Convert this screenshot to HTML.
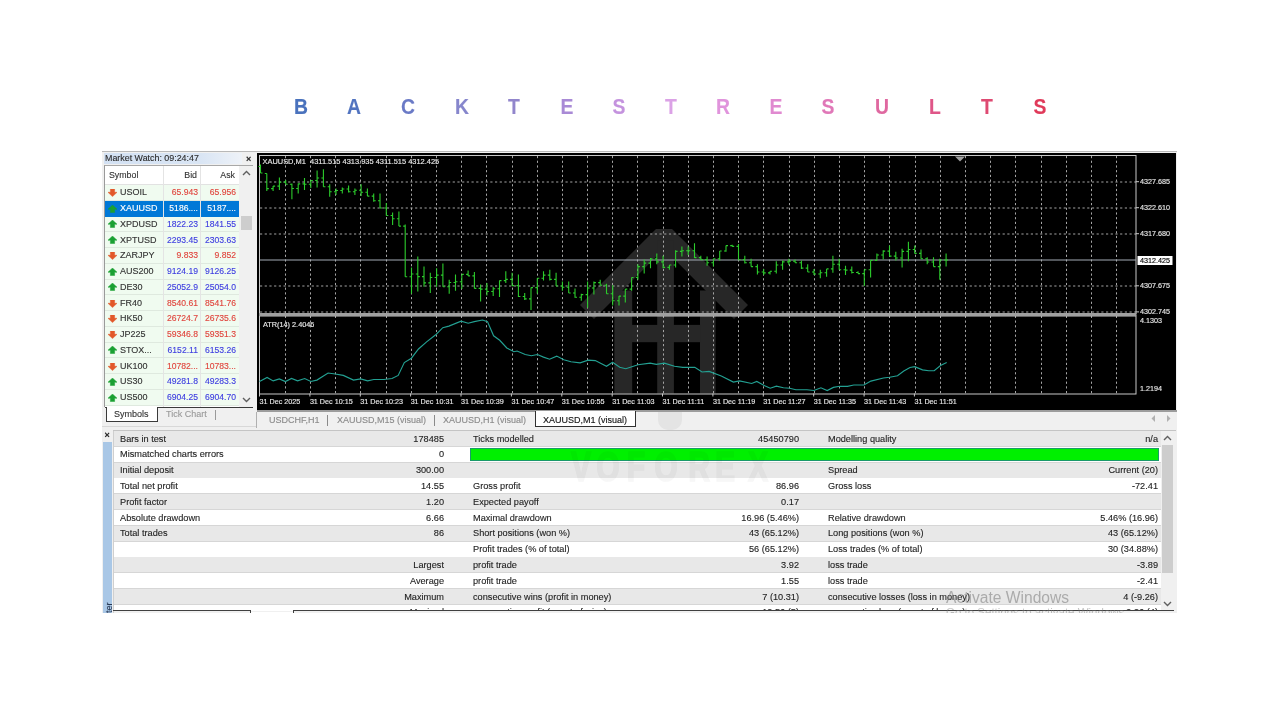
<!DOCTYPE html>
<html><head><meta charset="utf-8">
<style>
*{margin:0;padding:0;box-sizing:border-box}
html,body{width:1280px;height:720px;overflow:hidden;background:#fff;font-family:"Liberation Sans", sans-serif;}
.a{position:absolute}
.t{position:absolute;white-space:nowrap;line-height:1;-webkit-text-stroke:0.12px currentColor}
</style></head><body>

<div class="t" style="left:293px;top:96px;width:16px;text-align:center;font-size:22px;font-weight:bold;color:#4a72bd;transform:scaleX(0.88)">B</div>
<div class="t" style="left:346px;top:96px;width:16px;text-align:center;font-size:22px;font-weight:bold;color:#5274c0;transform:scaleX(0.88)">A</div>
<div class="t" style="left:400px;top:96px;width:16px;text-align:center;font-size:22px;font-weight:bold;color:#6a7ac6;transform:scaleX(0.88)">C</div>
<div class="t" style="left:454px;top:96px;width:16px;text-align:center;font-size:22px;font-weight:bold;color:#8686cc;transform:scaleX(0.88)">K</div>
<div class="t" style="left:506px;top:96px;width:16px;text-align:center;font-size:22px;font-weight:bold;color:#9286cc;transform:scaleX(0.88)">T</div>
<div class="t" style="left:559px;top:96px;width:16px;text-align:center;font-size:22px;font-weight:bold;color:#a98ad6;transform:scaleX(0.88)">E</div>
<div class="t" style="left:611px;top:96px;width:16px;text-align:center;font-size:22px;font-weight:bold;color:#c493de;transform:scaleX(0.88)">S</div>
<div class="t" style="left:663px;top:96px;width:16px;text-align:center;font-size:22px;font-weight:bold;color:#dba2e6;transform:scaleX(0.88)">T</div>
<div class="t" style="left:715px;top:96px;width:16px;text-align:center;font-size:22px;font-weight:bold;color:#e094dc;transform:scaleX(0.88)">R</div>
<div class="t" style="left:768px;top:96px;width:16px;text-align:center;font-size:22px;font-weight:bold;color:#e08ad0;transform:scaleX(0.88)">E</div>
<div class="t" style="left:820px;top:96px;width:16px;text-align:center;font-size:22px;font-weight:bold;color:#e078b8;transform:scaleX(0.88)">S</div>
<div class="t" style="left:874px;top:96px;width:16px;text-align:center;font-size:22px;font-weight:bold;color:#df68a0;transform:scaleX(0.88)">U</div>
<div class="t" style="left:927px;top:96px;width:16px;text-align:center;font-size:22px;font-weight:bold;color:#df5688;transform:scaleX(0.88)">L</div>
<div class="t" style="left:979px;top:96px;width:16px;text-align:center;font-size:22px;font-weight:bold;color:#de4a72;transform:scaleX(0.88)">T</div>
<div class="t" style="left:1032px;top:96px;width:16px;text-align:center;font-size:22px;font-weight:bold;color:#e03a5a;transform:scaleX(0.88)">S</div>
<div class="a" style="left:102px;top:151px;width:1075px;height:462px;background:#f0f0f0"></div>
<div class="a" style="left:102px;top:151px;width:1075px;height:1px;background:#b8b8b8"></div>
<div class="a" style="left:104px;top:153px;width:138px;height:11px;background:linear-gradient(90deg,#d3e1f3 0%,#d9e5f4 70%,#eef2f8 100%)"></div>
<div class="t" style="left:105px;top:154.4px;font-size:8.9px;color:#2a2a2a">Market Watch: 09:24:47</div>
<div class="t" style="left:246px;top:155.3px;font-size:9px;font-weight:bold;color:#222">&#215;</div>
<div class="a" style="left:104px;top:165px;width:135px;height:242px;background:#fff;border-left:1px solid #9a9a9a;border-top:1px solid #a8a8a8"></div>
<div class="a" style="left:105px;top:184px;width:134px;height:1px;background:#e2e2e2"></div>
<div class="t" style="left:109px;top:171px;font-size:8.8px;color:#333">Symbol</div>
<div class="t" style="left:160px;width:37px;text-align:right;top:171px;font-size:8.8px;color:#333">Bid</div>
<div class="t" style="left:198px;width:37px;text-align:right;top:171px;font-size:8.8px;color:#333">Ask</div>
<div class="a" style="left:105px;top:185.00px;width:134px;height:15.75px;background:#f0fbf0"></div>
<div class="a" style="left:105px;top:199.75px;width:134px;height:1px;background:#dfe9df"></div>
<svg class="a" style="left:107.6px;top:189.28px" width="9" height="8"><polygon points="2.4,0 6.6,0 6.6,3.3 9,3.3 4.5,7.6 0,3.3 2.4,3.3" fill="#e2582a" stroke="#e2582a" stroke-width="0.5" stroke-linejoin="round"/></svg>
<div class="t" style="left:120px;top:188.28px;font-size:9px;color:#333">USOIL</div>
<div class="t" style="left:160px;width:38px;text-align:right;top:188.28px;font-size:8.6px;color:#e0443c">65.943</div>
<div class="t" style="left:198px;width:38px;text-align:right;top:188.28px;font-size:8.6px;color:#e0443c">65.956</div>
<div class="a" style="left:105px;top:200.75px;width:134px;height:15.75px;background:#0078d7"></div>
<svg class="a" style="left:107.6px;top:204.62px" width="9" height="8"><polygon points="4.5,0 9,4.2 6.6,4.2 6.6,7.6 2.4,7.6 2.4,4.2 0,4.2" fill="#1aa032" stroke="#1aa032" stroke-width="0.5" stroke-linejoin="round"/></svg>
<div class="t" style="left:120px;top:204.03px;font-size:9px;color:#fff">XAUUSD</div>
<div class="t" style="left:160px;width:38px;text-align:right;top:204.03px;font-size:8.6px;color:#fff">5186....</div>
<div class="t" style="left:198px;width:38px;text-align:right;top:204.03px;font-size:8.6px;color:#fff">5187....</div>
<div class="a" style="left:105px;top:216.50px;width:134px;height:15.75px;background:#f0fbf0"></div>
<div class="a" style="left:105px;top:231.25px;width:134px;height:1px;background:#dfe9df"></div>
<svg class="a" style="left:107.6px;top:220.38px" width="9" height="8"><polygon points="4.5,0 9,4.2 6.6,4.2 6.6,7.6 2.4,7.6 2.4,4.2 0,4.2" fill="#1aa032" stroke="#1aa032" stroke-width="0.5" stroke-linejoin="round"/></svg>
<div class="t" style="left:120px;top:219.78px;font-size:9px;color:#333">XPDUSD</div>
<div class="t" style="left:160px;width:38px;text-align:right;top:219.78px;font-size:8.6px;color:#3c3ce0">1822.23</div>
<div class="t" style="left:198px;width:38px;text-align:right;top:219.78px;font-size:8.6px;color:#3c3ce0">1841.55</div>
<div class="a" style="left:105px;top:232.25px;width:134px;height:15.75px;background:#f0fbf0"></div>
<div class="a" style="left:105px;top:247.00px;width:134px;height:1px;background:#dfe9df"></div>
<svg class="a" style="left:107.6px;top:236.12px" width="9" height="8"><polygon points="4.5,0 9,4.2 6.6,4.2 6.6,7.6 2.4,7.6 2.4,4.2 0,4.2" fill="#1aa032" stroke="#1aa032" stroke-width="0.5" stroke-linejoin="round"/></svg>
<div class="t" style="left:120px;top:235.53px;font-size:9px;color:#333">XPTUSD</div>
<div class="t" style="left:160px;width:38px;text-align:right;top:235.53px;font-size:8.6px;color:#3c3ce0">2293.45</div>
<div class="t" style="left:198px;width:38px;text-align:right;top:235.53px;font-size:8.6px;color:#3c3ce0">2303.63</div>
<div class="a" style="left:105px;top:248.00px;width:134px;height:15.75px;background:#f0fbf0"></div>
<div class="a" style="left:105px;top:262.75px;width:134px;height:1px;background:#dfe9df"></div>
<svg class="a" style="left:107.6px;top:252.28px" width="9" height="8"><polygon points="2.4,0 6.6,0 6.6,3.3 9,3.3 4.5,7.6 0,3.3 2.4,3.3" fill="#e2582a" stroke="#e2582a" stroke-width="0.5" stroke-linejoin="round"/></svg>
<div class="t" style="left:120px;top:251.28px;font-size:9px;color:#333">ZARJPY</div>
<div class="t" style="left:160px;width:38px;text-align:right;top:251.28px;font-size:8.6px;color:#e0443c">9.833</div>
<div class="t" style="left:198px;width:38px;text-align:right;top:251.28px;font-size:8.6px;color:#e0443c">9.852</div>
<div class="a" style="left:105px;top:263.75px;width:134px;height:15.75px;background:#f0fbf0"></div>
<div class="a" style="left:105px;top:278.50px;width:134px;height:1px;background:#dfe9df"></div>
<svg class="a" style="left:107.6px;top:267.62px" width="9" height="8"><polygon points="4.5,0 9,4.2 6.6,4.2 6.6,7.6 2.4,7.6 2.4,4.2 0,4.2" fill="#1aa032" stroke="#1aa032" stroke-width="0.5" stroke-linejoin="round"/></svg>
<div class="t" style="left:120px;top:267.02px;font-size:9px;color:#333">AUS200</div>
<div class="t" style="left:160px;width:38px;text-align:right;top:267.02px;font-size:8.6px;color:#3c3ce0">9124.19</div>
<div class="t" style="left:198px;width:38px;text-align:right;top:267.02px;font-size:8.6px;color:#3c3ce0">9126.25</div>
<div class="a" style="left:105px;top:279.50px;width:134px;height:15.75px;background:#f0fbf0"></div>
<div class="a" style="left:105px;top:294.25px;width:134px;height:1px;background:#dfe9df"></div>
<svg class="a" style="left:107.6px;top:283.38px" width="9" height="8"><polygon points="4.5,0 9,4.2 6.6,4.2 6.6,7.6 2.4,7.6 2.4,4.2 0,4.2" fill="#1aa032" stroke="#1aa032" stroke-width="0.5" stroke-linejoin="round"/></svg>
<div class="t" style="left:120px;top:282.77px;font-size:9px;color:#333">DE30</div>
<div class="t" style="left:160px;width:38px;text-align:right;top:282.77px;font-size:8.6px;color:#3c3ce0">25052.9</div>
<div class="t" style="left:198px;width:38px;text-align:right;top:282.77px;font-size:8.6px;color:#3c3ce0">25054.0</div>
<div class="a" style="left:105px;top:295.25px;width:134px;height:15.75px;background:#f0fbf0"></div>
<div class="a" style="left:105px;top:310.00px;width:134px;height:1px;background:#dfe9df"></div>
<svg class="a" style="left:107.6px;top:299.52px" width="9" height="8"><polygon points="2.4,0 6.6,0 6.6,3.3 9,3.3 4.5,7.6 0,3.3 2.4,3.3" fill="#e2582a" stroke="#e2582a" stroke-width="0.5" stroke-linejoin="round"/></svg>
<div class="t" style="left:120px;top:298.52px;font-size:9px;color:#333">FR40</div>
<div class="t" style="left:160px;width:38px;text-align:right;top:298.52px;font-size:8.6px;color:#e0443c">8540.61</div>
<div class="t" style="left:198px;width:38px;text-align:right;top:298.52px;font-size:8.6px;color:#e0443c">8541.76</div>
<div class="a" style="left:105px;top:311.00px;width:134px;height:15.75px;background:#f0fbf0"></div>
<div class="a" style="left:105px;top:325.75px;width:134px;height:1px;background:#dfe9df"></div>
<svg class="a" style="left:107.6px;top:315.27px" width="9" height="8"><polygon points="2.4,0 6.6,0 6.6,3.3 9,3.3 4.5,7.6 0,3.3 2.4,3.3" fill="#e2582a" stroke="#e2582a" stroke-width="0.5" stroke-linejoin="round"/></svg>
<div class="t" style="left:120px;top:314.27px;font-size:9px;color:#333">HK50</div>
<div class="t" style="left:160px;width:38px;text-align:right;top:314.27px;font-size:8.6px;color:#e0443c">26724.7</div>
<div class="t" style="left:198px;width:38px;text-align:right;top:314.27px;font-size:8.6px;color:#e0443c">26735.6</div>
<div class="a" style="left:105px;top:326.75px;width:134px;height:15.75px;background:#f0fbf0"></div>
<div class="a" style="left:105px;top:341.50px;width:134px;height:1px;background:#dfe9df"></div>
<svg class="a" style="left:107.6px;top:331.02px" width="9" height="8"><polygon points="2.4,0 6.6,0 6.6,3.3 9,3.3 4.5,7.6 0,3.3 2.4,3.3" fill="#e2582a" stroke="#e2582a" stroke-width="0.5" stroke-linejoin="round"/></svg>
<div class="t" style="left:120px;top:330.02px;font-size:9px;color:#333">JP225</div>
<div class="t" style="left:160px;width:38px;text-align:right;top:330.02px;font-size:8.6px;color:#e0443c">59346.8</div>
<div class="t" style="left:198px;width:38px;text-align:right;top:330.02px;font-size:8.6px;color:#e0443c">59351.3</div>
<div class="a" style="left:105px;top:342.50px;width:134px;height:15.75px;background:#f0fbf0"></div>
<div class="a" style="left:105px;top:357.25px;width:134px;height:1px;background:#dfe9df"></div>
<svg class="a" style="left:107.6px;top:346.38px" width="9" height="8"><polygon points="4.5,0 9,4.2 6.6,4.2 6.6,7.6 2.4,7.6 2.4,4.2 0,4.2" fill="#1aa032" stroke="#1aa032" stroke-width="0.5" stroke-linejoin="round"/></svg>
<div class="t" style="left:120px;top:345.77px;font-size:9px;color:#333">STOX...</div>
<div class="t" style="left:160px;width:38px;text-align:right;top:345.77px;font-size:8.6px;color:#3c3ce0">6152.11</div>
<div class="t" style="left:198px;width:38px;text-align:right;top:345.77px;font-size:8.6px;color:#3c3ce0">6153.26</div>
<div class="a" style="left:105px;top:358.25px;width:134px;height:15.75px;background:#f0fbf0"></div>
<div class="a" style="left:105px;top:373.00px;width:134px;height:1px;background:#dfe9df"></div>
<svg class="a" style="left:107.6px;top:362.52px" width="9" height="8"><polygon points="2.4,0 6.6,0 6.6,3.3 9,3.3 4.5,7.6 0,3.3 2.4,3.3" fill="#e2582a" stroke="#e2582a" stroke-width="0.5" stroke-linejoin="round"/></svg>
<div class="t" style="left:120px;top:361.52px;font-size:9px;color:#333">UK100</div>
<div class="t" style="left:160px;width:38px;text-align:right;top:361.52px;font-size:8.6px;color:#e0443c">10782...</div>
<div class="t" style="left:198px;width:38px;text-align:right;top:361.52px;font-size:8.6px;color:#e0443c">10783...</div>
<div class="a" style="left:105px;top:374.00px;width:134px;height:15.75px;background:#f0fbf0"></div>
<div class="a" style="left:105px;top:388.75px;width:134px;height:1px;background:#dfe9df"></div>
<svg class="a" style="left:107.6px;top:377.88px" width="9" height="8"><polygon points="4.5,0 9,4.2 6.6,4.2 6.6,7.6 2.4,7.6 2.4,4.2 0,4.2" fill="#1aa032" stroke="#1aa032" stroke-width="0.5" stroke-linejoin="round"/></svg>
<div class="t" style="left:120px;top:377.27px;font-size:9px;color:#333">US30</div>
<div class="t" style="left:160px;width:38px;text-align:right;top:377.27px;font-size:8.6px;color:#3c3ce0">49281.8</div>
<div class="t" style="left:198px;width:38px;text-align:right;top:377.27px;font-size:8.6px;color:#3c3ce0">49283.3</div>
<div class="a" style="left:105px;top:389.75px;width:134px;height:15.75px;background:#f0fbf0"></div>
<div class="a" style="left:105px;top:404.50px;width:134px;height:1px;background:#dfe9df"></div>
<svg class="a" style="left:107.6px;top:393.62px" width="9" height="8"><polygon points="4.5,0 9,4.2 6.6,4.2 6.6,7.6 2.4,7.6 2.4,4.2 0,4.2" fill="#1aa032" stroke="#1aa032" stroke-width="0.5" stroke-linejoin="round"/></svg>
<div class="t" style="left:120px;top:393.02px;font-size:9px;color:#333">US500</div>
<div class="t" style="left:160px;width:38px;text-align:right;top:393.02px;font-size:8.6px;color:#3c3ce0">6904.25</div>
<div class="t" style="left:198px;width:38px;text-align:right;top:393.02px;font-size:8.6px;color:#3c3ce0">6904.70</div>
<div class="a" style="left:162.5px;top:166px;width:1px;height:241px;background:#e4e4e4"></div>
<div class="a" style="left:200px;top:166px;width:1px;height:241px;background:#e4e4e4"></div>
<div class="a" style="left:239px;top:165px;width:14px;height:242px;background:#f0f0f0"></div>
<div class="a" style="left:239px;top:165px;width:14px;height:1px;background:#a8a8a8"></div>
<svg class="a" style="left:242px;top:170px" width="9" height="6"><polyline points="1,5 4.5,1.5 8,5" fill="none" stroke="#606060" stroke-width="1.4"/></svg>
<svg class="a" style="left:242px;top:397px" width="9" height="6"><polyline points="1,1 4.5,4.5 8,1" fill="none" stroke="#606060" stroke-width="1.4"/></svg>
<div class="a" style="left:241px;top:216px;width:11px;height:13.5px;background:#cdcdcd"></div>
<div class="a" style="left:105px;top:406.5px;width:148px;height:1.2px;background:#3a3a3a"></div>
<div class="a" style="left:105.5px;top:407px;width:52px;height:15px;background:#fff;border:1px solid #3a3a3a;border-top:none"></div>
<div class="t" style="left:114px;top:410px;font-size:9px;color:#333">Symbols</div>
<div class="t" style="left:166px;top:410px;font-size:9px;color:#9a9a9a">Tick Chart</div>
<div class="a" style="left:215px;top:410px;width:1px;height:10px;background:#9a9a9a"></div>
<div class="a" style="left:102px;top:426px;width:155px;height:1px;background:#d8d8d8"></div>
<svg class="a" style="left:257px;top:152.5px" width="919" height="257.5" viewBox="257 152.5 919 257.5"><rect x="257" y="152.5" width="919" height="257.5" fill="#000"/><polygon points="580,304.4 656,228.4 672,228.4 748,304.4 734,318.4 664,248.4 594,318.4" fill="#272727"/><rect x="614.4" y="290" width="17.8" height="103" fill="#272727"/><rect x="657.2" y="240" width="16.7" height="153" fill="#272727"/><rect x="700" y="290" width="15.6" height="103" fill="#272727"/><rect x="632" y="324.4" width="68.2" height="17.3" fill="#272727"/><line x1="285.5" y1="155.5" x2="285.5" y2="393" stroke="#a4a4a4" stroke-width="1" stroke-dasharray="2.2,2.5"/><line x1="310.5" y1="155.5" x2="310.5" y2="393" stroke="#a4a4a4" stroke-width="1" stroke-dasharray="2.2,2.5"/><line x1="335.5" y1="155.5" x2="335.5" y2="393" stroke="#a4a4a4" stroke-width="1" stroke-dasharray="2.2,2.5"/><line x1="360.5" y1="155.5" x2="360.5" y2="393" stroke="#a4a4a4" stroke-width="1" stroke-dasharray="2.2,2.5"/><line x1="386.5" y1="155.5" x2="386.5" y2="393" stroke="#a4a4a4" stroke-width="1" stroke-dasharray="2.2,2.5"/><line x1="411.5" y1="155.5" x2="411.5" y2="393" stroke="#a4a4a4" stroke-width="1" stroke-dasharray="2.2,2.5"/><line x1="436.5" y1="155.5" x2="436.5" y2="393" stroke="#a4a4a4" stroke-width="1" stroke-dasharray="2.2,2.5"/><line x1="461.5" y1="155.5" x2="461.5" y2="393" stroke="#a4a4a4" stroke-width="1" stroke-dasharray="2.2,2.5"/><line x1="486.5" y1="155.5" x2="486.5" y2="393" stroke="#a4a4a4" stroke-width="1" stroke-dasharray="2.2,2.5"/><line x1="512.5" y1="155.5" x2="512.5" y2="393" stroke="#a4a4a4" stroke-width="1" stroke-dasharray="2.2,2.5"/><line x1="537.5" y1="155.5" x2="537.5" y2="393" stroke="#a4a4a4" stroke-width="1" stroke-dasharray="2.2,2.5"/><line x1="562.5" y1="155.5" x2="562.5" y2="393" stroke="#a4a4a4" stroke-width="1" stroke-dasharray="2.2,2.5"/><line x1="587.5" y1="155.5" x2="587.5" y2="393" stroke="#a4a4a4" stroke-width="1" stroke-dasharray="2.2,2.5"/><line x1="612.5" y1="155.5" x2="612.5" y2="393" stroke="#a4a4a4" stroke-width="1" stroke-dasharray="2.2,2.5"/><line x1="637.5" y1="155.5" x2="637.5" y2="393" stroke="#a4a4a4" stroke-width="1" stroke-dasharray="2.2,2.5"/><line x1="663.5" y1="155.5" x2="663.5" y2="393" stroke="#a4a4a4" stroke-width="1" stroke-dasharray="2.2,2.5"/><line x1="688.5" y1="155.5" x2="688.5" y2="393" stroke="#a4a4a4" stroke-width="1" stroke-dasharray="2.2,2.5"/><line x1="713.5" y1="155.5" x2="713.5" y2="393" stroke="#a4a4a4" stroke-width="1" stroke-dasharray="2.2,2.5"/><line x1="738.5" y1="155.5" x2="738.5" y2="393" stroke="#a4a4a4" stroke-width="1" stroke-dasharray="2.2,2.5"/><line x1="763.5" y1="155.5" x2="763.5" y2="393" stroke="#a4a4a4" stroke-width="1" stroke-dasharray="2.2,2.5"/><line x1="789.5" y1="155.5" x2="789.5" y2="393" stroke="#a4a4a4" stroke-width="1" stroke-dasharray="2.2,2.5"/><line x1="814.5" y1="155.5" x2="814.5" y2="393" stroke="#a4a4a4" stroke-width="1" stroke-dasharray="2.2,2.5"/><line x1="839.5" y1="155.5" x2="839.5" y2="393" stroke="#a4a4a4" stroke-width="1" stroke-dasharray="2.2,2.5"/><line x1="864.5" y1="155.5" x2="864.5" y2="393" stroke="#a4a4a4" stroke-width="1" stroke-dasharray="2.2,2.5"/><line x1="889.5" y1="155.5" x2="889.5" y2="393" stroke="#a4a4a4" stroke-width="1" stroke-dasharray="2.2,2.5"/><line x1="915.5" y1="155.5" x2="915.5" y2="393" stroke="#a4a4a4" stroke-width="1" stroke-dasharray="2.2,2.5"/><line x1="940.5" y1="155.5" x2="940.5" y2="393" stroke="#a4a4a4" stroke-width="1" stroke-dasharray="2.2,2.5"/><line x1="965.5" y1="155.5" x2="965.5" y2="393" stroke="#a4a4a4" stroke-width="1" stroke-dasharray="2.2,2.5"/><line x1="990.5" y1="155.5" x2="990.5" y2="393" stroke="#a4a4a4" stroke-width="1" stroke-dasharray="2.2,2.5"/><line x1="1015.5" y1="155.5" x2="1015.5" y2="393" stroke="#a4a4a4" stroke-width="1" stroke-dasharray="2.2,2.5"/><line x1="1041.5" y1="155.5" x2="1041.5" y2="393" stroke="#a4a4a4" stroke-width="1" stroke-dasharray="2.2,2.5"/><line x1="1066.5" y1="155.5" x2="1066.5" y2="393" stroke="#a4a4a4" stroke-width="1" stroke-dasharray="2.2,2.5"/><line x1="1091.5" y1="155.5" x2="1091.5" y2="393" stroke="#a4a4a4" stroke-width="1" stroke-dasharray="2.2,2.5"/><line x1="1116.5" y1="155.5" x2="1116.5" y2="393" stroke="#a4a4a4" stroke-width="1" stroke-dasharray="2.2,2.5"/><line x1="260" y1="181.5" x2="1136" y2="181.5" stroke="#a4a4a4" stroke-width="1" stroke-dasharray="2.2,2.5"/><line x1="260" y1="207.5" x2="1136" y2="207.5" stroke="#a4a4a4" stroke-width="1" stroke-dasharray="2.2,2.5"/><line x1="260" y1="233.5" x2="1136" y2="233.5" stroke="#a4a4a4" stroke-width="1" stroke-dasharray="2.2,2.5"/><line x1="260" y1="285.5" x2="1136" y2="285.5" stroke="#a4a4a4" stroke-width="1" stroke-dasharray="2.2,2.5"/><line x1="260" y1="311.5" x2="1136" y2="311.5" stroke="#a4a4a4" stroke-width="1" stroke-dasharray="2.2,2.5"/><rect x="259.5" y="155" width="876.5" height="158" fill="none" stroke="#c8c8c8" stroke-width="1"/><rect x="259.5" y="315.5" width="876.5" height="78" fill="none" stroke="#c8c8c8" stroke-width="1"/><rect x="259" y="312.5" width="877.5" height="3" fill="#a0a0a0"/><line x1="260" y1="259.5" x2="1136" y2="259.5" stroke="#a4acb6" stroke-width="1"/><path d="M260.5 164.0V172.5M258.5 166.0H260.5M260.5 172.5H262.5M266.8 173.0V190.6M264.8 173.0H266.8M266.8 188.1H268.8M273.1 185.6V190.6M271.1 188.1H273.1M273.1 185.6H275.1M279.4 177.0V189.4M277.4 185.6H279.4M279.4 181.6H281.4M285.7 179.4V183.8M283.7 181.6H285.7M285.7 183.8H287.7M291.9 183.0V198.8M289.9 183.8H291.9M291.9 188.0H293.9M298.2 183.0V193.0M296.2 188.0H298.2M298.2 183.4H300.2M304.5 177.5V189.4M302.5 183.4H304.5M304.5 183.8H306.5M310.8 180.0V187.5M308.8 183.8H310.8M310.8 180.0H312.8M317.1 170.0V187.0M315.1 180.0H317.1M317.1 177.5H319.1M323.4 168.8V186.2M321.4 177.5H323.4M323.4 186.2H325.4M329.7 183.8V196.2M327.7 186.2H329.7M329.7 191.2H331.7M336.0 188.0V194.4M334.0 191.2H336.0M336.0 190.0H338.0M342.3 187.0V193.0M340.3 190.0H342.3M342.3 188.5H344.3M348.6 185.0V192.0M346.6 188.5H348.6M348.6 191.2H350.6M354.9 188.0V194.4M352.9 191.2H354.9M354.9 189.7H356.9M361.1 183.8V195.6M359.1 189.7H361.1M361.1 191.8H363.1M367.4 188.0V195.6M365.4 191.8H367.4M367.4 195.6H369.4M373.7 193.0V201.2M371.7 195.6H373.7M373.7 200.2H375.7M380.0 193.0V207.5M378.0 200.2H380.0M380.0 207.5H382.0M386.3 202.5V215.0M384.3 207.5H386.3M386.3 215.0H388.3M392.6 212.0V224.4M390.6 215.0H392.6M392.6 218.3H394.6M398.9 211.0V225.6M396.9 218.3H398.9M398.9 225.6H400.9M405.2 224.0V276.2M403.2 225.6H405.2M405.2 276.2H407.2M411.5 267.0V293.3M409.5 276.2H411.5M411.5 273.5H413.5M417.8 256.0V291.0M415.8 273.5H417.8M417.8 276.1H419.8M424.0 266.0V286.3M422.0 276.1H424.0M424.0 282.4H426.0M430.3 272.3V292.5M428.3 282.4H430.3M430.3 277.0H432.3M436.6 267.7V286.3M434.6 277.0H436.6M436.6 274.6H438.6M442.9 263.0V286.3M440.9 274.6H442.9M442.9 286.3H444.9M449.2 279.3V293.3M447.2 286.3H449.2M449.2 282.0H451.2M455.5 273.9V290.2M453.5 282.0H455.5M455.5 281.2H457.5M461.8 273.9V288.6M459.8 281.2H461.8M461.8 273.9H463.8M468.1 270.0V275.4M466.1 273.9H468.1M468.1 275.4H470.1M474.4 271.5V287.9M472.4 275.4H474.4M474.4 287.9H476.4M480.6 284.0V301.0M478.6 287.9H480.6M480.6 288.6H482.6M486.9 282.4V294.9M484.9 288.6H486.9M486.9 291.0H488.9M493.2 286.3V295.6M491.2 291.0H493.2M493.2 288.2H495.2M499.5 280.1V296.4M497.5 288.2H499.5M499.5 280.1H501.5M505.8 270.8V282.4M503.8 280.1H505.8M505.8 278.9H507.8M512.1 272.3V285.5M510.1 278.9H512.1M512.1 285.1H514.1M518.4 273.9V296.4M516.4 285.1H518.4M518.4 296.0H520.4M524.7 292.5V299.5M522.7 296.0H524.7M524.7 298.4H526.7M531.0 287.1V309.6M529.0 298.4H531.0M531.0 287.1H533.0M537.3 277.8V293.3M535.3 287.1H537.3M537.3 277.8H539.3M543.5 270.8V280.1M541.5 277.8H543.5M543.5 274.6H545.5M549.8 269.2V280.1M547.8 274.6H549.8M549.8 278.9H551.8M556.1 272.3V285.5M554.1 278.9H556.1M556.1 285.5H558.1M562.4 280.9V290.2M560.4 285.5H562.4M562.4 286.7H564.4M568.7 280.9V292.5M566.7 286.7H568.7M568.7 292.5H570.7M575.0 287.9V297.2M573.0 292.5H575.0M575.0 296.8H577.0M581.3 293.3V300.3M579.3 296.8H581.3M581.3 294.1H583.3M587.6 280.9V307.3M585.6 294.1H587.6M587.6 287.5H589.6M593.9 280.9V294.1M591.9 287.5H593.9M593.9 282.1H595.9M600.2 279.3V284.8M598.2 282.1H600.2M600.2 284.8H602.2M606.5 283.2V293.3M604.5 284.8H606.5M606.5 293.3H608.5M612.7 284.8V305.0M610.7 293.3H612.7M612.7 300.3H614.7M619.0 295.6V305.0M617.0 300.3H619.0M619.0 295.6H621.0M625.3 288.6V301.9M623.3 295.6H625.3M625.3 288.6H627.3M631.6 277.0V290.2M629.6 288.6H631.6M631.6 277.0H633.6M637.9 263.8V279.3M635.9 277.0H637.9M637.9 266.1H639.9M644.2 259.1V273.1M642.2 266.1H644.2M644.2 262.6H646.2M650.5 257.5V267.7M648.5 262.6H650.5M650.5 258.4H652.5M656.8 252.9V263.8M654.8 258.4H656.8M656.8 261.4H658.8M663.1 255.2V267.7M661.1 261.4H663.1M663.1 266.9H665.1M669.4 264.5V269.2M667.4 266.9H669.4M669.4 264.5H671.4M675.6 249.8V266.9M673.6 264.5H675.6M675.6 250.9H677.6M681.9 245.9V256.0M679.9 250.9H681.9M681.9 250.2H683.9M688.2 245.9V254.4M686.2 250.2H688.2M688.2 250.2H690.2M694.5 242.8V257.5M692.5 250.2H694.5M694.5 257.1H696.5M700.8 255.2V259.1M698.8 257.1H700.8M700.8 259.1H702.8M707.1 256.0V265.3M705.1 259.1H707.1M707.1 262.2H709.1M713.4 258.3V266.1M711.4 262.2H713.4M713.4 258.3H715.4M719.7 250.5V259.9M717.7 258.3H719.7M719.7 250.5H721.7M726.0 245.1V251.3M724.0 250.5H726.0M726.0 245.1H728.0M732.2 244.3V245.9M730.2 245.1H732.2M732.2 245.9H734.2M738.5 243.5V259.1M736.5 245.9H738.5M738.5 259.1H740.5M744.8 255.2V263.0M742.8 259.1H744.8M744.8 262.2H746.8M751.1 258.3V266.1M749.1 262.2H751.1M751.1 266.1H753.1M757.4 263.8V273.9M755.4 266.1H757.4M757.4 271.5H759.4M763.7 268.4V274.6M761.7 271.5H763.7M763.7 272.4H765.7M770.0 270.8V273.9M768.0 272.4H770.0M770.0 270.8H772.0M776.3 260.7V273.1M774.3 270.8H776.3M776.3 264.5H778.3M782.6 259.9V269.2M780.6 264.5H782.6M782.6 261.4H784.6M788.9 258.3V264.5M786.9 261.4H788.9M788.9 260.6H790.9M795.1 259.1V262.2M793.1 260.6H795.1M795.1 262.2H797.1M801.4 259.9V268.4M799.4 262.2H801.4M801.4 267.6H803.4M807.7 263.8V271.5M805.7 267.6H807.7M807.7 271.5H809.7M814.0 268.4V274.6M812.0 271.5H814.0M814.0 273.5H816.0M820.3 269.2V277.8M818.3 273.5H820.3M820.3 272.3H822.3M826.6 268.4V276.2M824.6 272.3H826.6M826.6 268.4H828.6M832.9 255.2V272.3M830.9 268.4H832.9M832.9 263.8H834.9M839.2 258.3V269.2M837.2 263.8H839.2M839.2 269.2H841.2M845.5 265.3V274.6M843.5 269.2H845.5M845.5 269.6H847.5M851.8 266.1V273.1M849.8 269.6H851.8M851.8 272.0H853.8M858.0 270.8V273.1M856.0 272.0H858.0M858.0 273.1H860.0M864.3 269.2V285.5M862.3 273.1H864.3M864.3 269.2H866.3M870.6 259.9V277.0M868.6 269.2H870.6M870.6 259.9H872.6M876.9 252.9V259.9M874.9 259.9H876.9M876.9 254.5H878.9M883.2 249.8V259.1M881.2 254.5H883.2M883.2 250.6H885.2M889.5 245.1V256.0M887.5 250.6H889.5M889.5 255.6H891.5M895.8 251.3V259.9M893.8 255.6H895.8M895.8 257.5H897.8M902.1 248.2V266.9M900.1 257.5H902.1M902.1 250.9H904.1M908.4 241.2V260.7M906.4 250.9H908.4M908.4 249.0H910.4M914.7 245.1V252.9M912.7 249.0H914.7M914.7 252.9H916.7M921.0 249.0V258.3M919.0 252.9H921.0M921.0 258.3H923.0M927.2 256.8V263.8M925.2 258.3H927.2M927.2 261.5H929.2M933.5 256.8V266.1M931.5 261.5H933.5M933.5 266.1H935.5M939.8 258.3V279.3M937.8 266.1H939.8M939.8 259.5H941.8M946.1 252.9V266.1M944.1 259.5H946.1M946.1 259.5H948.1" stroke="#2ccc2c" stroke-width="1.1" fill="none"/><polyline points="259.5,381.0 267.1,377.0 273.2,380.4 279.3,378.4 285.4,381.0 291.5,378.0 297.6,380.4 304.7,378.0 310.8,381.0 316.9,379.6 328.1,372.5 335.2,373.5 343.3,374.9 353.5,379.6 360.6,378.4 367.7,380.4 373.8,379.0 383.9,379.0 392.0,378.0 398.2,374.9 404.3,362.1 411.4,357.7 418.5,348.5 426.6,341.4 435.7,334.3 442.8,327.2 448.9,325.6 461.1,320.7 468.2,322.7 474.3,321.1 482.5,319.5 487.5,321.1 493.6,335.3 499.7,339.8 506.8,347.5 513.9,351.2 517.1,350.5 525.2,354.0 531.3,355.2 537.4,354.0 543.5,356.6 549.6,358.7 556.7,355.6 563.8,359.3 570.9,361.3 580.1,362.3 588.2,359.7 595.3,360.1 606.5,365.8 612.6,361.7 619.7,366.8 625.8,368.2 638.0,364.2 650.2,362.7 656.3,363.8 664.4,362.7 674.5,365.8 682.7,366.8 694.8,366.8 702.0,371.5 709.1,370.9 721.3,375.5 733.4,381.6 739.5,380.4 751.7,383.0 756.8,381.0 764.7,385.3 770.2,387.7 776.4,385.6 783.4,387.3 789.7,387.7 795.9,389.2 806.9,389.2 813.9,390.0 820.9,387.3 827.2,390.0 833.4,386.9 839.7,385.8 847.5,385.8 853.8,384.5 863.9,384.5 870.9,380.6 883.4,377.5 889.7,376.7 897.5,375.2 903.8,370.5 910.0,367.0 914.7,366.2 922.5,369.4 928.8,370.2 934.2,370.2 940.5,365.0 946.7,361.9" fill="none" stroke="#23a092" stroke-width="1.15"/><polygon points="955,156 965,156 960,161" fill="#a0a0a0"/><text x="262.5" y="163.4" font-family="Liberation Sans" font-size="7.45" fill="#e6e6e6" stroke="#e6e6e6" stroke-width="0.15" text-anchor="start" >XAUUSD,M1&#160;&#160;4311.515 4313.935 4311.515 4312.425</text><text x="263" y="326.4" font-family="Liberation Sans" font-size="7.3" fill="#e6e6e6" stroke="#e6e6e6" stroke-width="0.15" text-anchor="start" >ATR(14) 2.4046</text><text x="1140" y="183.2" font-family="Liberation Sans" font-size="7.2" fill="#e6e6e6" stroke="#e6e6e6" stroke-width="0.15" text-anchor="start" >4327.685</text><line x1="1136" y1="181.2" x2="1139" y2="181.2" stroke="#c8c8c8"/><text x="1140" y="209.2" font-family="Liberation Sans" font-size="7.2" fill="#e6e6e6" stroke="#e6e6e6" stroke-width="0.15" text-anchor="start" >4322.610</text><line x1="1136" y1="207.2" x2="1139" y2="207.2" stroke="#c8c8c8"/><text x="1140" y="235.2" font-family="Liberation Sans" font-size="7.2" fill="#e6e6e6" stroke="#e6e6e6" stroke-width="0.15" text-anchor="start" >4317.680</text><line x1="1136" y1="233.2" x2="1139" y2="233.2" stroke="#c8c8c8"/><text x="1140" y="287.3" font-family="Liberation Sans" font-size="7.2" fill="#e6e6e6" stroke="#e6e6e6" stroke-width="0.15" text-anchor="start" >4307.675</text><line x1="1136" y1="285.3" x2="1139" y2="285.3" stroke="#c8c8c8"/><text x="1140" y="313.4" font-family="Liberation Sans" font-size="7.2" fill="#e6e6e6" stroke="#e6e6e6" stroke-width="0.15" text-anchor="start" >4302.745</text><line x1="1136" y1="311.4" x2="1139" y2="311.4" stroke="#c8c8c8"/><rect x="1137.5" y="255.5" width="35" height="9" fill="#fff"/><text x="1140" y="262.3" font-family="Liberation Sans" font-size="7.2" fill="#000" stroke="#000" stroke-width="0.15" text-anchor="start" >4312.425</text><text x="1140" y="322.8" font-family="Liberation Sans" font-size="7.2" fill="#e6e6e6" stroke="#e6e6e6" stroke-width="0.15" text-anchor="start" >4.1303</text><text x="1140" y="390.6" font-family="Liberation Sans" font-size="7.2" fill="#e6e6e6" stroke="#e6e6e6" stroke-width="0.15" text-anchor="start" >1.2194</text><text x="259.5" y="403.6" font-family="Liberation Sans" font-size="7.2" fill="#e6e6e6" stroke="#e6e6e6" stroke-width="0.15" text-anchor="start" >31 Dec 2025</text><line x1="259.5" y1="393" x2="259.5" y2="396" stroke="#c8c8c8"/><text x="309.88" y="403.6" font-family="Liberation Sans" font-size="7.2" fill="#e6e6e6" stroke="#e6e6e6" stroke-width="0.15" text-anchor="start" >31 Dec 10:15</text><line x1="309.9" y1="393" x2="309.9" y2="396" stroke="#c8c8c8"/><text x="360.26" y="403.6" font-family="Liberation Sans" font-size="7.2" fill="#e6e6e6" stroke="#e6e6e6" stroke-width="0.15" text-anchor="start" >31 Dec 10:23</text><line x1="360.3" y1="393" x2="360.3" y2="396" stroke="#c8c8c8"/><text x="410.64" y="403.6" font-family="Liberation Sans" font-size="7.2" fill="#e6e6e6" stroke="#e6e6e6" stroke-width="0.15" text-anchor="start" >31 Dec 10:31</text><line x1="410.6" y1="393" x2="410.6" y2="396" stroke="#c8c8c8"/><text x="461.02" y="403.6" font-family="Liberation Sans" font-size="7.2" fill="#e6e6e6" stroke="#e6e6e6" stroke-width="0.15" text-anchor="start" >31 Dec 10:39</text><line x1="461.0" y1="393" x2="461.0" y2="396" stroke="#c8c8c8"/><text x="511.4" y="403.6" font-family="Liberation Sans" font-size="7.2" fill="#e6e6e6" stroke="#e6e6e6" stroke-width="0.15" text-anchor="start" >31 Dec 10:47</text><line x1="511.4" y1="393" x2="511.4" y2="396" stroke="#c8c8c8"/><text x="561.78" y="403.6" font-family="Liberation Sans" font-size="7.2" fill="#e6e6e6" stroke="#e6e6e6" stroke-width="0.15" text-anchor="start" >31 Dec 10:55</text><line x1="561.8" y1="393" x2="561.8" y2="396" stroke="#c8c8c8"/><text x="612.1600000000001" y="403.6" font-family="Liberation Sans" font-size="7.2" fill="#e6e6e6" stroke="#e6e6e6" stroke-width="0.15" text-anchor="start" >31 Dec 11:03</text><line x1="612.2" y1="393" x2="612.2" y2="396" stroke="#c8c8c8"/><text x="662.54" y="403.6" font-family="Liberation Sans" font-size="7.2" fill="#e6e6e6" stroke="#e6e6e6" stroke-width="0.15" text-anchor="start" >31 Dec 11:11</text><line x1="662.5" y1="393" x2="662.5" y2="396" stroke="#c8c8c8"/><text x="712.9200000000001" y="403.6" font-family="Liberation Sans" font-size="7.2" fill="#e6e6e6" stroke="#e6e6e6" stroke-width="0.15" text-anchor="start" >31 Dec 11:19</text><line x1="712.9" y1="393" x2="712.9" y2="396" stroke="#c8c8c8"/><text x="763.3" y="403.6" font-family="Liberation Sans" font-size="7.2" fill="#e6e6e6" stroke="#e6e6e6" stroke-width="0.15" text-anchor="start" >31 Dec 11:27</text><line x1="763.3" y1="393" x2="763.3" y2="396" stroke="#c8c8c8"/><text x="813.6800000000001" y="403.6" font-family="Liberation Sans" font-size="7.2" fill="#e6e6e6" stroke="#e6e6e6" stroke-width="0.15" text-anchor="start" >31 Dec 11:35</text><line x1="813.7" y1="393" x2="813.7" y2="396" stroke="#c8c8c8"/><text x="864.0600000000001" y="403.6" font-family="Liberation Sans" font-size="7.2" fill="#e6e6e6" stroke="#e6e6e6" stroke-width="0.15" text-anchor="start" >31 Dec 11:43</text><line x1="864.1" y1="393" x2="864.1" y2="396" stroke="#c8c8c8"/><text x="914.44" y="403.6" font-family="Liberation Sans" font-size="7.2" fill="#e6e6e6" stroke="#e6e6e6" stroke-width="0.15" text-anchor="start" >31 Dec 11:51</text><line x1="914.4" y1="393" x2="914.4" y2="396" stroke="#c8c8c8"/></svg>
<div class="a" style="left:257px;top:410px;width:920px;height:2px;background:#9c9c9c"></div>
<div class="a" style="left:257px;top:412px;width:920px;height:16px;background:#f0f0f0"></div>
<div class="a" style="left:256px;top:412px;width:1px;height:16px;background:#b0b0b0"></div>
<div class="t" style="left:269px;top:415.5px;font-size:9px;color:#8a8a8a">USDCHF,H1</div>
<div class="a" style="left:327px;top:414.5px;width:1px;height:11px;background:#8a8a8a"></div>
<div class="t" style="left:337px;top:415.5px;font-size:9px;color:#8a8a8a">XAUUSD,M15 (visual)</div>
<div class="a" style="left:434px;top:414.5px;width:1px;height:11px;background:#8a8a8a"></div>
<div class="t" style="left:443px;top:415.5px;font-size:9px;color:#8a8a8a">XAUUSD,H1 (visual)</div>
<div class="a" style="left:535px;top:411px;width:101px;height:15.5px;background:#fff;border:1px solid #303030;border-top:none"></div>
<div class="t" style="left:543px;top:415.5px;font-size:9px;color:#111">XAUUSD,M1 (visual)</div>
<svg class="a" style="left:1150px;top:415px" width="22" height="8"><polygon points="5,0 5,7 1.5,3.5" fill="#b0b0b0"/><polygon points="17,0 17,7 20.5,3.5" fill="#b0b0b0"/></svg>
<div class="a" style="left:102px;top:428px;width:1075px;height:185px;background:#f0f0f0"></div>
<div class="a" style="left:113px;top:430px;width:1063px;height:1.3px;background:#c4c4c4"></div>
<div class="t" style="left:104.6px;top:431px;font-size:9px;font-weight:bold;color:#222">&#215;</div>
<div class="a" style="left:102.5px;top:442px;width:9px;height:171px;background:#a9c7e6"></div>
<div class="a" style="left:102.5px;top:442px;width:9.5px;height:171px;overflow:hidden"><div class="t" style="left:2px;top:184.5px;font-size:9px;color:#2a3a55;transform:rotate(-90deg);transform-origin:left top">Tester</div></div>
<div class="a" style="left:113.5px;top:431px;width:1047.5px;height:180px;overflow:hidden;background:#fff">
<div class="a" style="left:0;top:0.00px;width:1048px;height:15.80px;background:#e8e8e8"></div>
<div class="a" style="left:0;top:15.00px;width:1048px;height:1px;background:#d6d6d6"></div>
<div class="t" style="left:6.5px;top:3.50px;font-size:9.2px;color:#1e1e1e">Bars in test</div>
<div class="t" style="left:180px;width:150.5px;text-align:right;top:3.50px;font-size:9.2px;color:#1e1e1e">178485</div>
<div class="t" style="left:359.5px;top:3.50px;font-size:9.2px;color:#1e1e1e">Ticks modelled</div>
<div class="t" style="left:535px;width:150.5px;text-align:right;top:3.50px;font-size:9.2px;color:#1e1e1e">45450790</div>
<div class="t" style="left:714.5px;top:3.50px;font-size:9.2px;color:#1e1e1e">Modelling quality</div>
<div class="t" style="left:894px;width:150.5px;text-align:right;top:3.50px;font-size:9.2px;color:#1e1e1e">n/a</div>
<div class="a" style="left:0;top:15.80px;width:1048px;height:15.80px;background:#ffffff"></div>
<div class="a" style="left:0;top:30.80px;width:1048px;height:1px;background:#d6d6d6"></div>
<div class="t" style="left:6.5px;top:19.30px;font-size:9.2px;color:#1e1e1e">Mismatched charts errors</div>
<div class="t" style="left:180px;width:150.5px;text-align:right;top:19.30px;font-size:9.2px;color:#1e1e1e">0</div>
<div class="a" style="left:0;top:31.60px;width:1048px;height:15.80px;background:#e8e8e8"></div>
<div class="a" style="left:0;top:46.60px;width:1048px;height:1px;background:#d6d6d6"></div>
<div class="t" style="left:6.5px;top:35.10px;font-size:9.2px;color:#1e1e1e">Initial deposit</div>
<div class="t" style="left:180px;width:150.5px;text-align:right;top:35.10px;font-size:9.2px;color:#1e1e1e">300.00</div>
<div class="t" style="left:714.5px;top:35.10px;font-size:9.2px;color:#1e1e1e">Spread</div>
<div class="t" style="left:894px;width:150.5px;text-align:right;top:35.10px;font-size:9.2px;color:#1e1e1e">Current (20)</div>
<div class="a" style="left:0;top:47.40px;width:1048px;height:15.80px;background:#ffffff"></div>
<div class="a" style="left:0;top:62.40px;width:1048px;height:1px;background:#d6d6d6"></div>
<div class="t" style="left:6.5px;top:50.90px;font-size:9.2px;color:#1e1e1e">Total net profit</div>
<div class="t" style="left:180px;width:150.5px;text-align:right;top:50.90px;font-size:9.2px;color:#1e1e1e">14.55</div>
<div class="t" style="left:359.5px;top:50.90px;font-size:9.2px;color:#1e1e1e">Gross profit</div>
<div class="t" style="left:535px;width:150.5px;text-align:right;top:50.90px;font-size:9.2px;color:#1e1e1e">86.96</div>
<div class="t" style="left:714.5px;top:50.90px;font-size:9.2px;color:#1e1e1e">Gross loss</div>
<div class="t" style="left:894px;width:150.5px;text-align:right;top:50.90px;font-size:9.2px;color:#1e1e1e">-72.41</div>
<div class="a" style="left:0;top:63.20px;width:1048px;height:15.80px;background:#e8e8e8"></div>
<div class="a" style="left:0;top:78.20px;width:1048px;height:1px;background:#d6d6d6"></div>
<div class="t" style="left:6.5px;top:66.70px;font-size:9.2px;color:#1e1e1e">Profit factor</div>
<div class="t" style="left:180px;width:150.5px;text-align:right;top:66.70px;font-size:9.2px;color:#1e1e1e">1.20</div>
<div class="t" style="left:359.5px;top:66.70px;font-size:9.2px;color:#1e1e1e">Expected payoff</div>
<div class="t" style="left:535px;width:150.5px;text-align:right;top:66.70px;font-size:9.2px;color:#1e1e1e">0.17</div>
<div class="a" style="left:0;top:79.00px;width:1048px;height:15.80px;background:#ffffff"></div>
<div class="a" style="left:0;top:94.00px;width:1048px;height:1px;background:#d6d6d6"></div>
<div class="t" style="left:6.5px;top:82.50px;font-size:9.2px;color:#1e1e1e">Absolute drawdown</div>
<div class="t" style="left:180px;width:150.5px;text-align:right;top:82.50px;font-size:9.2px;color:#1e1e1e">6.66</div>
<div class="t" style="left:359.5px;top:82.50px;font-size:9.2px;color:#1e1e1e">Maximal drawdown</div>
<div class="t" style="left:535px;width:150.5px;text-align:right;top:82.50px;font-size:9.2px;color:#1e1e1e">16.96 (5.46%)</div>
<div class="t" style="left:714.5px;top:82.50px;font-size:9.2px;color:#1e1e1e">Relative drawdown</div>
<div class="t" style="left:894px;width:150.5px;text-align:right;top:82.50px;font-size:9.2px;color:#1e1e1e">5.46% (16.96)</div>
<div class="a" style="left:0;top:94.80px;width:1048px;height:15.80px;background:#e8e8e8"></div>
<div class="a" style="left:0;top:109.80px;width:1048px;height:1px;background:#d6d6d6"></div>
<div class="t" style="left:6.5px;top:98.30px;font-size:9.2px;color:#1e1e1e">Total trades</div>
<div class="t" style="left:180px;width:150.5px;text-align:right;top:98.30px;font-size:9.2px;color:#1e1e1e">86</div>
<div class="t" style="left:359.5px;top:98.30px;font-size:9.2px;color:#1e1e1e">Short positions (won %)</div>
<div class="t" style="left:535px;width:150.5px;text-align:right;top:98.30px;font-size:9.2px;color:#1e1e1e">43 (65.12%)</div>
<div class="t" style="left:714.5px;top:98.30px;font-size:9.2px;color:#1e1e1e">Long positions (won %)</div>
<div class="t" style="left:894px;width:150.5px;text-align:right;top:98.30px;font-size:9.2px;color:#1e1e1e">43 (65.12%)</div>
<div class="a" style="left:0;top:110.60px;width:1048px;height:15.80px;background:#ffffff"></div>
<div class="a" style="left:0;top:125.60px;width:1048px;height:1px;background:#d6d6d6"></div>
<div class="t" style="left:359.5px;top:114.10px;font-size:9.2px;color:#1e1e1e">Profit trades (% of total)</div>
<div class="t" style="left:535px;width:150.5px;text-align:right;top:114.10px;font-size:9.2px;color:#1e1e1e">56 (65.12%)</div>
<div class="t" style="left:714.5px;top:114.10px;font-size:9.2px;color:#1e1e1e">Loss trades (% of total)</div>
<div class="t" style="left:894px;width:150.5px;text-align:right;top:114.10px;font-size:9.2px;color:#1e1e1e">30 (34.88%)</div>
<div class="a" style="left:0;top:126.40px;width:1048px;height:15.80px;background:#e8e8e8"></div>
<div class="a" style="left:0;top:141.40px;width:1048px;height:1px;background:#d6d6d6"></div>
<div class="t" style="left:180px;width:150.5px;text-align:right;top:129.90px;font-size:9.2px;color:#1e1e1e">Largest</div>
<div class="t" style="left:359.5px;top:129.90px;font-size:9.2px;color:#1e1e1e">profit trade</div>
<div class="t" style="left:535px;width:150.5px;text-align:right;top:129.90px;font-size:9.2px;color:#1e1e1e">3.92</div>
<div class="t" style="left:714.5px;top:129.90px;font-size:9.2px;color:#1e1e1e">loss trade</div>
<div class="t" style="left:894px;width:150.5px;text-align:right;top:129.90px;font-size:9.2px;color:#1e1e1e">-3.89</div>
<div class="a" style="left:0;top:142.20px;width:1048px;height:15.80px;background:#ffffff"></div>
<div class="a" style="left:0;top:157.20px;width:1048px;height:1px;background:#d6d6d6"></div>
<div class="t" style="left:180px;width:150.5px;text-align:right;top:145.70px;font-size:9.2px;color:#1e1e1e">Average</div>
<div class="t" style="left:359.5px;top:145.70px;font-size:9.2px;color:#1e1e1e">profit trade</div>
<div class="t" style="left:535px;width:150.5px;text-align:right;top:145.70px;font-size:9.2px;color:#1e1e1e">1.55</div>
<div class="t" style="left:714.5px;top:145.70px;font-size:9.2px;color:#1e1e1e">loss trade</div>
<div class="t" style="left:894px;width:150.5px;text-align:right;top:145.70px;font-size:9.2px;color:#1e1e1e">-2.41</div>
<div class="a" style="left:0;top:158.00px;width:1048px;height:15.80px;background:#e8e8e8"></div>
<div class="a" style="left:0;top:173.00px;width:1048px;height:1px;background:#d6d6d6"></div>
<div class="t" style="left:180px;width:150.5px;text-align:right;top:161.50px;font-size:9.2px;color:#1e1e1e">Maximum</div>
<div class="t" style="left:359.5px;top:161.50px;font-size:9.2px;color:#1e1e1e">consecutive wins (profit in money)</div>
<div class="t" style="left:535px;width:150.5px;text-align:right;top:161.50px;font-size:9.2px;color:#1e1e1e">7 (10.31)</div>
<div class="t" style="left:714.5px;top:161.50px;font-size:9.2px;color:#1e1e1e">consecutive losses (loss in money)</div>
<div class="t" style="left:894px;width:150.5px;text-align:right;top:161.50px;font-size:9.2px;color:#1e1e1e">4 (-9.26)</div>
<div class="a" style="left:0;top:173.80px;width:1048px;height:15.80px;background:#ffffff"></div>
<div class="a" style="left:0;top:188.80px;width:1048px;height:1px;background:#d6d6d6"></div>
<div class="t" style="left:180px;width:150.5px;text-align:right;top:177.30px;font-size:9.2px;color:#1e1e1e">Maximal</div>
<div class="t" style="left:359.5px;top:177.30px;font-size:9.2px;color:#1e1e1e">consecutive profit (count of wins)</div>
<div class="t" style="left:535px;width:150.5px;text-align:right;top:177.30px;font-size:9.2px;color:#1e1e1e">12.56 (5)</div>
<div class="t" style="left:714.5px;top:177.30px;font-size:9.2px;color:#1e1e1e">consecutive loss (count of losses)</div>
<div class="t" style="left:894px;width:150.5px;text-align:right;top:177.30px;font-size:9.2px;color:#1e1e1e">-9.26 (4)</div>
</div>
<div class="a" style="left:113px;top:431px;width:1px;height:182px;background:#cfcfcf"></div>
<div class="a" style="left:470px;top:447.5px;width:689px;height:13px;background:#00f000;border:1px solid #1a9a6a"></div>
<div class="a" style="left:1161px;top:431px;width:13px;height:180px;background:#f0f0f0"></div>
<div class="a" style="left:1162.3px;top:444.7px;width:11px;height:128px;background:#cdcdcd"></div>
<svg class="a" style="left:1163px;top:435px" width="9" height="6"><polyline points="1,5 4.5,1.5 8,5" fill="none" stroke="#606060" stroke-width="1.4"/></svg>
<svg class="a" style="left:1163px;top:601px" width="9" height="6"><polyline points="1,1 4.5,4.5 8,1" fill="none" stroke="#606060" stroke-width="1.4"/></svg>
<div class="a" style="left:113px;top:610.3px;width:138px;height:1.2px;background:#404040"></div>
<div class="a" style="left:250px;top:610.3px;width:1.2px;height:3px;background:#404040"></div>
<div class="a" style="left:293px;top:610.3px;width:881px;height:1.2px;background:#404040"></div>
<div class="a" style="left:293px;top:610.3px;width:1.2px;height:3px;background:#404040"></div>
<div class="a" style="left:251.2px;top:611.5px;width:41.8px;height:2px;background:#fff"></div>
<div class="a" style="left:102px;top:613px;width:1078px;height:10px;background:#fff"></div>
<div class="t" style="left:565.6px;top:445.5px;width:30px;text-align:center;font-size:42px;font-weight:bold;color:#f7f7f7;-webkit-text-stroke:1.6px #f7f7f7;mix-blend-mode:multiply;transform:scaleX(0.72)">V</div>
<div class="t" style="left:591.7px;top:445.5px;width:30px;text-align:center;font-size:42px;font-weight:bold;color:#f7f7f7;-webkit-text-stroke:1.6px #f7f7f7;mix-blend-mode:multiply;transform:scaleX(0.72)">O</div>
<div class="t" style="left:621.4px;top:445.5px;width:30px;text-align:center;font-size:42px;font-weight:bold;color:#f7f7f7;-webkit-text-stroke:1.6px #f7f7f7;mix-blend-mode:multiply;transform:scaleX(0.72)">F</div>
<div class="t" style="left:650.1px;top:445.5px;width:30px;text-align:center;font-size:42px;font-weight:bold;color:#f7f7f7;-webkit-text-stroke:1.6px #f7f7f7;mix-blend-mode:multiply;transform:scaleX(0.72)">O</div>
<div class="t" style="left:684.3px;top:445.5px;width:30px;text-align:center;font-size:42px;font-weight:bold;color:#f7f7f7;-webkit-text-stroke:1.6px #f7f7f7;mix-blend-mode:multiply;transform:scaleX(0.72)">R</div>
<div class="t" style="left:710.3px;top:445.5px;width:30px;text-align:center;font-size:42px;font-weight:bold;color:#f7f7f7;-webkit-text-stroke:1.6px #f7f7f7;mix-blend-mode:multiply;transform:scaleX(0.72)">E</div>
<div class="t" style="left:742.6px;top:445.5px;width:30px;text-align:center;font-size:42px;font-weight:bold;color:#f7f7f7;-webkit-text-stroke:1.6px #f7f7f7;mix-blend-mode:multiply;transform:scaleX(0.72)">X</div>
<div class="a" style="left:658px;top:412px;width:24px;height:18px;border-radius:0 0 10px 10px;background:#f3f3f3;mix-blend-mode:multiply"></div>
<div class="t" style="left:946px;top:589.5px;font-size:15.6px;color:rgba(120,120,120,0.55);-webkit-text-stroke:0">Activate Windows</div>
<div class="t" style="left:946px;top:606.5px;font-size:11.5px;color:rgba(120,120,120,0.45);-webkit-text-stroke:0">Go to Settings to activate Windows.</div>
<div class="a" style="left:940px;top:613px;width:240px;height:12px;background:#fff"></div>
</body></html>
